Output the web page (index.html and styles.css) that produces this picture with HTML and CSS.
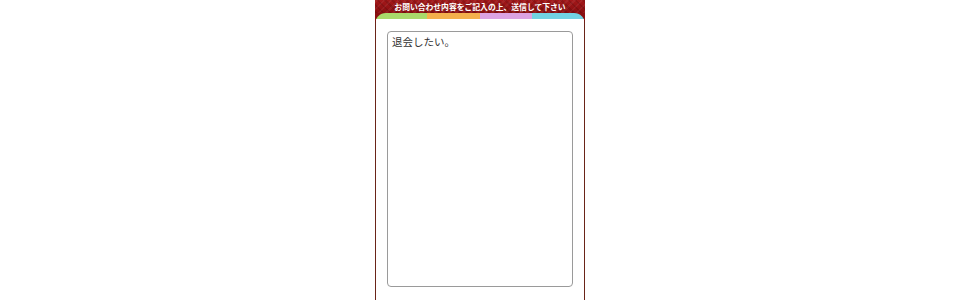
FILE: index.html
```html
<!DOCTYPE html>
<html lang="ja">
<head>
  <meta charset="UTF-8" />
  <meta name="viewport" content="width=device-width, initial-scale=1.0" />
  <title>お問い合わせ</title>
  <link rel="stylesheet" href="styles.css">
</head>
<body>
  <div class="page">
    <div class="head">お問い合わせ内容をご記入の上、送信して下さい</div>
    <div class="card">
      <div class="stripe"></div>
      <div class="inner">
        <textarea class="msg">退会したい。</textarea>
      </div>
    </div>
  </div>
</body>
</html>
```

FILE: styles.css
```css
:root {
  --red: #8a0e10;
  --edge: #6a2418;
  --jp: "Noto Sans CJK JP", "Noto Sans", sans-serif;
}
* { box-sizing: border-box; }
body {
  margin: 0;
  background: #fff;
  font-family: var(--jp);
}
.page {
  width: 210px;
  height: 300px;
  margin: 0 auto;
  background: var(--red);
  display: flex;
  flex-direction: column;
  overflow: hidden;
}
.head {
  height: 13px;
  line-height: 13px;
  color: #fff;
  font-size: 7.8px;
  font-weight: bold;
  text-align: center;
  background:
    repeating-linear-gradient(45deg, rgba(0,0,0,0.12) 0 2px, transparent 2px 5px),
    repeating-linear-gradient(-45deg, rgba(255,255,255,0.06) 0 2px, transparent 2px 5px),
    linear-gradient(#a3181a, var(--red));
}
.card {
  flex: 1;
  display: flex;
  flex-direction: column;
  border-radius: 11px 11px 0 0;
  overflow: hidden;
  background: var(--edge);
}
.stripe {
  height: 6px;
  flex: none;
  background: linear-gradient(90deg,
    #a9d96b 0 25%, #f4b04c 25% 50%, #dca3e2 50% 75%, #72d2e2 75% 100%);
}
.inner {
  flex: 1;
  margin: 0 1px;
  background: #fff;
  padding: 12px 10px 0 11px;
}
.msg {
  display: block;
  width: 186px;
  height: 256px;
  border: 1px solid #9a9a9a;
  border-radius: 4px;
  padding: 2px 4px;
  font-family: var(--jp);
  font-size: 10.5px;
  color: #333;
  resize: none;
  outline: none;
}
```
